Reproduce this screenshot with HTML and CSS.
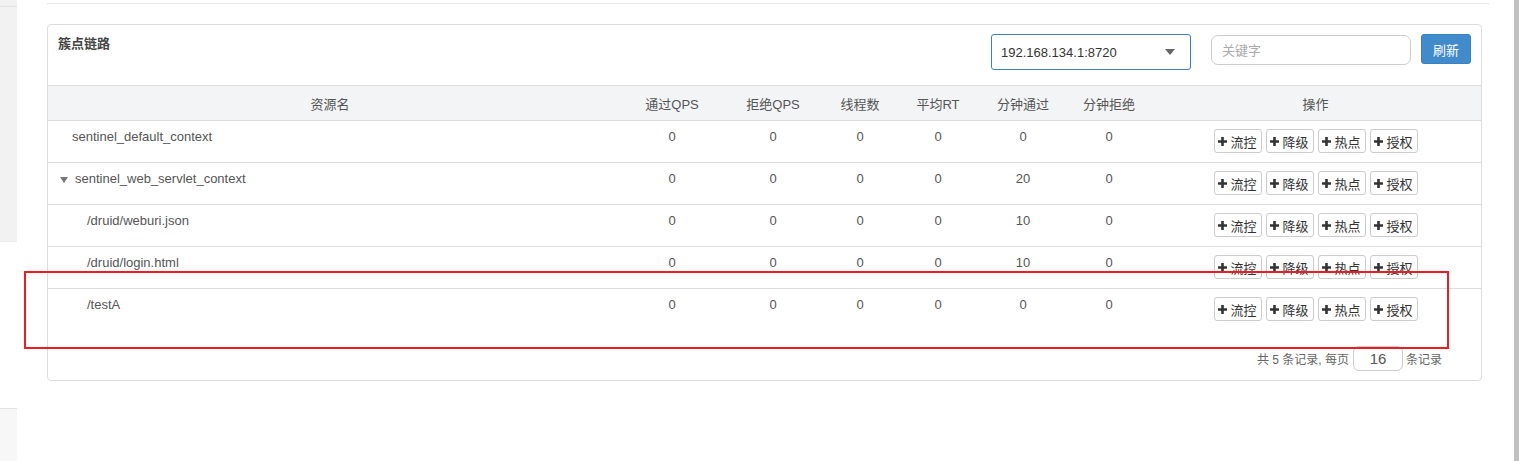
FILE: index.html
```html
<!DOCTYPE html>
<html lang="zh-CN">
<head>
    <meta charset="UTF-8">
    <title>簇点链路</title>
    <link rel="stylesheet" href="styles.css">
</head>
<body>
    <div class="sidebar">
        <div class="side-top"></div>
        <div class="side-menu"></div>
        <div class="side-blank"></div>
        <div class="side-rest"></div>
    </div>

    <div class="main">
        <div class="top-line"></div>

        <div class="card">
            <div class="card-head">
                <span class="card-title">簇点链路</span>
                <div class="tools">
                    <div class="machine-select">
                        <span>192.168.134.1:8720</span>
                        <svg class="select-caret" width="10" height="6" viewBox="0 0 10 6"><path d="M0 0h10L5 6z" fill="#666"/></svg>
                    </div>
                    <input class="search" type="text" placeholder="关键字">
                    <button class="btn-refresh">刷新</button>
                </div>
            </div>

            <table class="res-table">
                <colgroup>
                    <col style="width:564px">
                    <col style="width:120px">
                    <col style="width:82px">
                    <col style="width:92px">
                    <col style="width:64px">
                    <col style="width:106px">
                    <col style="width:66px">
                    <col>
                </colgroup>
                <thead>
                    <tr>
                        <th>资源名</th>
                        <th>通过QPS</th>
                        <th>拒绝QPS</th>
                        <th>线程数</th>
                        <th>平均RT</th>
                        <th>分钟通过</th>
                        <th>分钟拒绝</th>
                        <th class="ops-head">操作</th>
                    </tr>
                </thead>
                <tbody id="rows"></tbody>
            </table>

            <div class="pager">
                <span>共 5 条记录, 每页</span>
                <input class="page-size" type="text" value="16">
                <span>条记录</span>
            </div>
        </div>
    </div>

    <div class="scrollbar"></div>

    <div class="mark"></div>

    <script>
        var resources = [
            { name: 'sentinel_default_context', level: 0, vals: [0, 0, 0, 0, 0, 0] },
            { name: 'sentinel_web_servlet_context', level: 1, vals: [0, 0, 0, 0, 20, 0] },
            { name: '/druid/weburi.json', level: 2, vals: [0, 0, 0, 0, 10, 0] },
            { name: '/druid/login.html', level: 2, vals: [0, 0, 0, 0, 10, 0] },
            { name: '/testA', level: 2, vals: [0, 0, 0, 0, 0, 0] }
        ];

        var plus = '<svg class="plus" width="9" height="9" viewBox="0 0 9 9"><path d="M3.2 0h2.6v3.2H9v2.6H5.8V9H3.2V5.8H0V3.2h3.2z" fill="#333"/></svg>';
        var actions = ['流控', '降级', '热点', '授权'];

        var html = '';
        resources.forEach(function (r) {
            html += '<tr>';
            if (r.level === 1) {
                html += '<td class="name lvl1"><svg class="toggle" width="8" height="6" viewBox="0 0 8 6"><path d="M0 0h8L4 6z" fill="#777"/></svg>' + r.name + '</td>';
            } else {
                html += '<td class="name lvl' + r.level + '">' + r.name + '</td>';
            }
            r.vals.forEach(function (v) {
                html += '<td class="num">' + v + '</td>';
            });
            html += '<td class="ops">';
            actions.forEach(function (a) {
                html += '<button class="btn-op">' + plus + a + '</button>';
            });
            html += '</td></tr>';
        });
        document.getElementById('rows').innerHTML = html;
    </script>
</body>
</html>
```

FILE: styles.css
```css
* {
    box-sizing: border-box;
}

body {
    margin: 0;
    font-family: "Liberation Sans", "Noto Sans CJK SC", sans-serif;
    font-size: 13px;
    color: #555;
    background: #fff;
    display: flex;
    min-height: 461px;
    position: relative;
}

/* 左侧菜单残留 */
.sidebar {
    width: 17px;
    flex: none;
    display: flex;
    flex-direction: column;
}

.side-top {
    height: 7px;
    background: #f2f2f2;
    border-bottom: 1px solid #e2e2e2;
}

.side-menu {
    height: 234px;
    background: #f2f2f2;
}

.side-blank {
    height: 168px;
    background: #fff;
    border-top: 1px solid #ececec;
    border-bottom: 1px solid #e2e2e2;
}

.side-rest {
    flex: 1;
    background: #f7f7f7;
}

.main {
    flex: 1;
    padding: 0 32px 0 30px;
}

.top-line {
    height: 4px;
    border-bottom: 1px solid #e5e5e5;
    margin-right: -7px;
}

.scrollbar {
    width: 5px;
    flex: none;
    background: #c1c1c1;
}

.card {
    margin-top: 20px;
    border: 1px solid #ddd;
    border-radius: 4px;
}

.card-head {
    height: 60px;
    padding: 9px 10px 0 10px;
    display: flex;
    justify-content: space-between;
    align-items: flex-start;
}

.card-title {
    font-weight: bold;
    color: #444;
    line-height: 20px;
}

.tools {
    display: flex;
    align-items: flex-start;
}

.machine-select {
    width: 200px;
    height: 36px;
    border: 1px solid #3f7fc0;
    border-radius: 3px;
    padding: 0 15px 0 9px;
    display: flex;
    align-items: center;
    justify-content: space-between;
    color: #333;
    font-size: 13px;
}

.search {
    width: 200px;
    height: 30px;
    margin-left: 20px;
    margin-top: 1px;
    border: 1px solid #ccc;
    border-radius: 7px;
    padding: 0 10px;
    font-family: inherit;
    font-size: 13px;
    color: #555;
}

.search::placeholder {
    color: #aaa;
}

.btn-refresh {
    width: 50px;
    height: 30px;
    margin-left: 10px;
    border: 1px solid #3a80c2;
    border-radius: 3px;
    background: #428bca;
    color: #fff;
    font-family: inherit;
    font-size: 13px;
    padding: 0;
}

.res-table {
    width: 100%;
    table-layout: fixed;
    border-collapse: collapse;
}

.res-table th {
    height: 35px;
    background: #f3f4f5;
    border-top: 1px solid #ddd;
    border-bottom: 1px solid #ddd;
    font-weight: normal;
    color: #555;
    text-align: center;
    padding: 0;
}

.res-table th.ops-head {
    padding-left: 8px;
}

.res-table td {
    height: 42px;
    padding: 6px 0 0 0;
    vertical-align: top;
    line-height: 20px;
    border-bottom: 1px solid #ddd;
}

.res-table tr:last-child td {
    border-bottom: none;
}

.name.lvl0 {
    padding-left: 24px;
}

.name.lvl1 {
    padding-left: 12px;
}

.name.lvl2 {
    padding-left: 39px;
}

.toggle {
    margin-right: 7px;
    vertical-align: 0;
}

.num {
    text-align: center;
}

.res-table td.ops {
    padding: 8px 0 0 8px;
    text-align: center;
    font-size: 0;
}

.btn-op {
    height: 24px;
    width: 48px;
    margin: 0 2px;
    padding: 0;
    border: 1px solid #ccc;
    border-radius: 3px;
    background: #fff;
    color: #333;
    font-family: inherit;
    font-size: 13px;
    display: inline-flex;
    align-items: center;
    justify-content: center;
}

.plus {
    margin-right: 3px;
}

.pager {
    display: flex;
    justify-content: flex-end;
    align-items: center;
    padding: 15px 39px 9px 0;
    color: #666;
    font-size: 12px;
}

.page-size {
    width: 50px;
    height: 25px;
    margin: 0 3px 0 4px;
    border: 1px solid #ccc;
    border-radius: 6px;
    text-align: center;
    font-family: inherit;
    font-size: 15px;
    color: #555;
    padding: 0;
}

/* 截图上的红框标注 */
.mark {
    position: absolute;
    left: 24px;
    top: 271px;
    width: 1425px;
    height: 78px;
    border: 2px solid #ec1c24;
    pointer-events: none;
}
```
